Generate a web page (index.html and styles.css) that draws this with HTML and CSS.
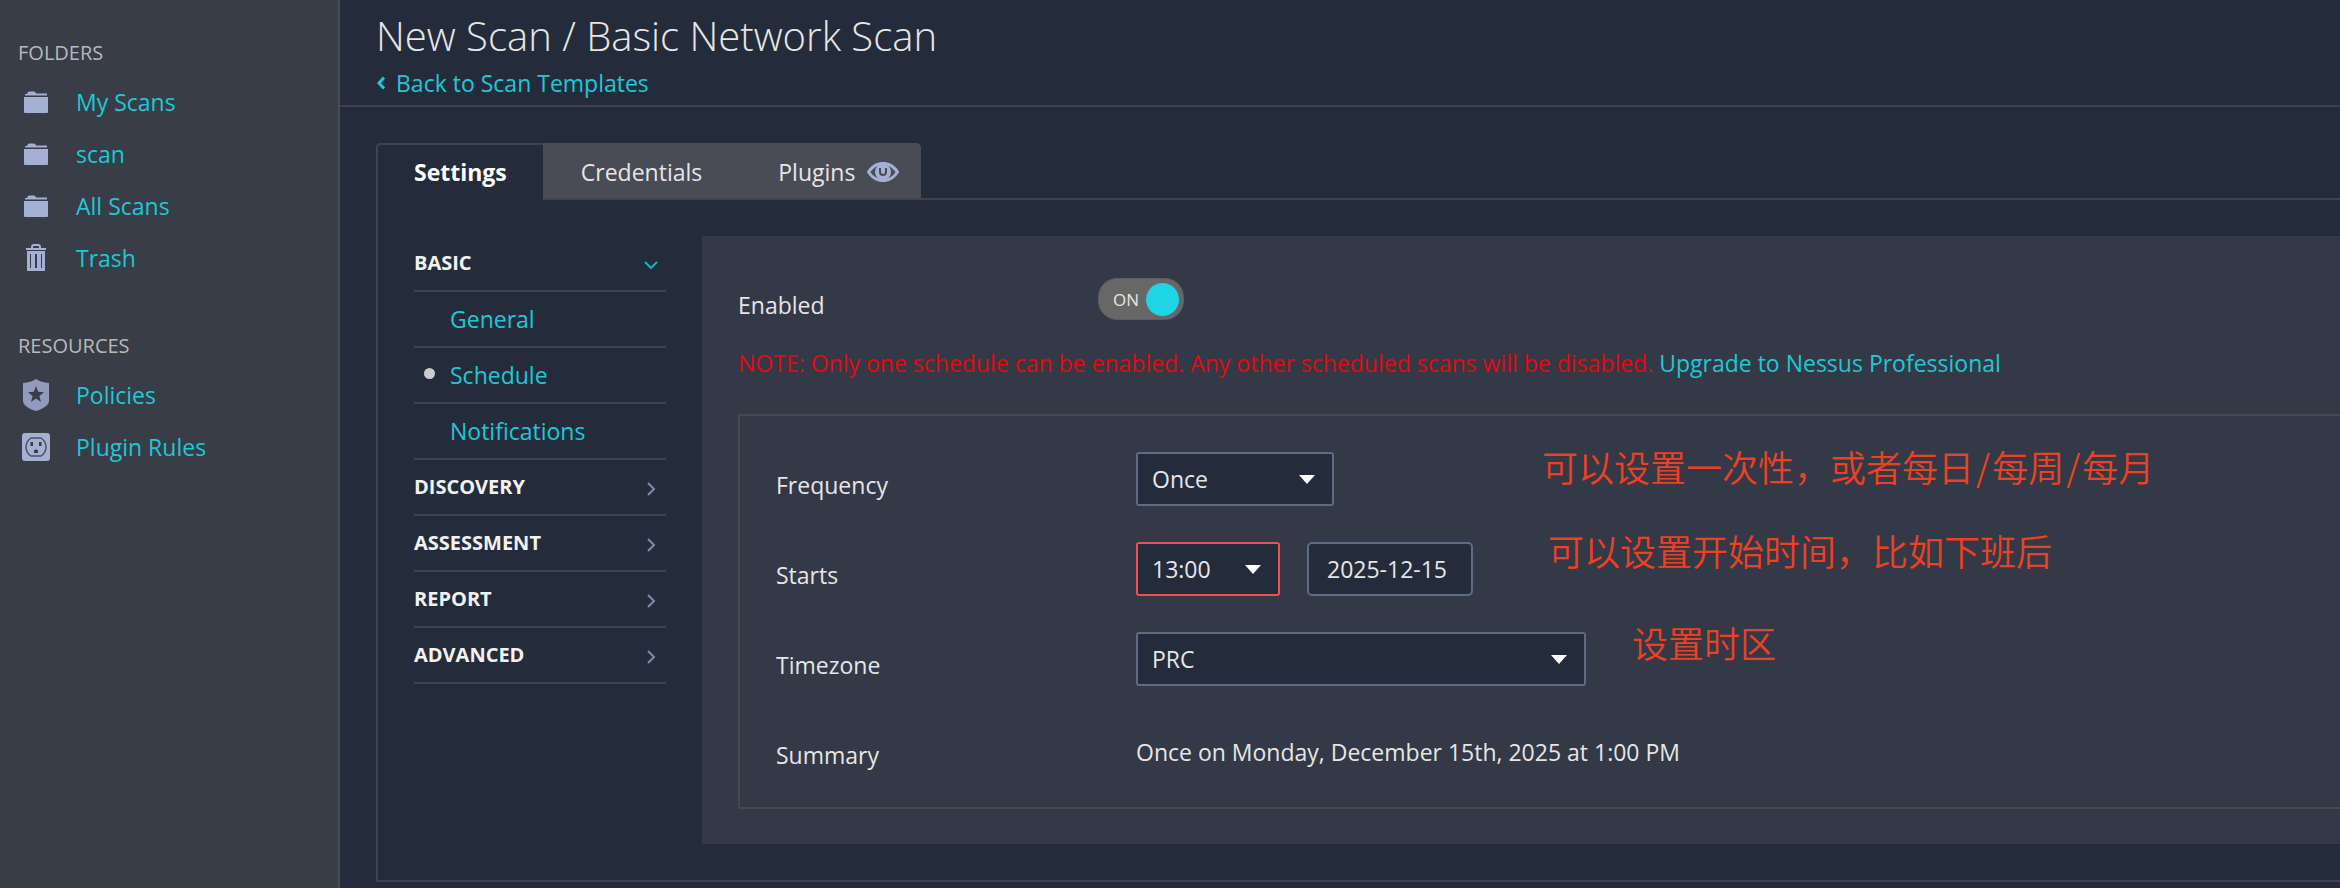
FILE: index.html
```html
<!DOCTYPE html>
<html lang="en">
<head>
    <meta charset="UTF-8">
    <meta name="viewport" content="width=device-width, initial-scale=1.0">
    <title>New Scan / Basic Network Scan</title>
    <link rel="stylesheet" href="styles.css">
</head>
<body>
    <!-- shared icons -->
    <svg class="defs" aria-hidden="true">
        <symbol id="folder" viewBox="0 0 24 22">
            <path d="M1 4.500V3h2c.6-2 1.500-2.500 3-2.500h3.500c1.500 0 2 .8 2.500 2h11v2z"/>
            <path d="M0 6h24v15a1 1 0 0 1-1 1H1a1 1 0 0 1-1-1z"/>
        </symbol>
        <symbol id="chevron" viewBox="0 0 16 16">
            <path d="M5 2l6 6-6 6" fill="none" stroke="currentColor" stroke-width="2"/>
        </symbol>
    </svg>

    <aside class="sidebar">
        <h3>Folders</h3>
        <ul>
            <li><a href="#"><span class="icon"><svg width="24" height="22"><use href="#folder"/></svg></span>My Scans</a></li>
            <li><a href="#"><span class="icon"><svg width="24" height="22"><use href="#folder"/></svg></span>scan</a></li>
            <li><a href="#"><span class="icon"><svg width="24" height="22"><use href="#folder"/></svg></span>All Scans</a></li>
            <li><a href="#"><span class="icon"><svg width="20" height="28" viewBox="0 0 20 28">
                <path d="M6 5V3a2 2 0 0 1 2-2h4a2 2 0 0 1 2 2v2" fill="none" stroke="currentColor" stroke-width="2"/>
                <path d="M0 4h20v2H0z"/>
                <path fill-rule="evenodd" d="M1 7h18v20H1zM4 10v14h1V10zM9 10v14h2V10zM15 10v14h1V10z"/>
            </svg></span>Trash</a></li>
        </ul>
        <h3>Resources</h3>
        <ul>
            <li><a href="#"><span class="icon shield"><svg width="26" height="32" viewBox="0 0 26 32">
                <path fill-rule="evenodd" d="M13 0c3 2.500 8 3.500 13 4v18c0 4-6 8-13 10C6 30 0 26 0 22V4c5-.5 10-1.500 13-4zM13 7l-2.200 5.800-5.800.4 4.600 3.800L8 23l5-3.400 5 3.400-1.600-6 4.600-3.800-5.800-.4z"/>
            </svg></span>Policies</a></li>
            <li><a href="#"><span class="icon"><svg width="28" height="28" viewBox="0 0 28 28">
                <rect width="28" height="28" rx="3"/>
                <path d="M9 5h10c3 2 5 5 5 9s-2 7-5 9H9c-3-2-5-5-5-9s2-7 5-9z" fill="none" stroke="#4a5163" stroke-width="1.500"/>
                <path d="M8.500 9h2.500v4H8.500zM17 9h2.500v4H17zM12 20v-2c0-2 4-2 4 0v2z" fill="#383d47"/>
            </svg></span>Plugin Rules</a></li>
        </ul>
    </aside>

    <div class="page">
        <header>
            <h1>New Scan / Basic Network Scan</h1>
            <a href="#" class="back"><svg width="10" height="14" viewBox="0 0 10 14"><path d="M8 1.500L3 7l5 5.500" fill="none" stroke="currentColor" stroke-width="3"/></svg>Back to Scan Templates</a>
        </header>

        <main>
            <nav class="tabs">
                <a href="#" class="active">Settings</a>
                <a href="#">Credentials</a>
                <a href="#">Plugins <svg width="32" height="20" viewBox="0 0 32 20">
                    <path d="M1.500 10C9-1.500 23-1.500 30.500 10 23 21.500 9 21.500 1.500 10z" fill="none" stroke="currentColor" stroke-width="3"/>
                    <circle cx="16" cy="10" r="8"/>
                    <path d="M13 6v4a3 3 0 0 0 6 0V6" fill="none" stroke="#494b55" stroke-width="2"/>
                </svg></a>
            </nav>

            <div class="panel">
                <ul class="menu">
                    <li class="open"><a href="#">Basic <svg width="16" height="16"><use href="#chevron"/></svg></a></li>
                    <li class="sub"><a href="#">General</a></li>
                    <li class="sub current"><a href="#">Schedule</a></li>
                    <li class="sub"><a href="#">Notifications</a></li>
                    <li><a href="#">Discovery <svg width="16" height="16"><use href="#chevron"/></svg></a></li>
                    <li><a href="#">Assessment <svg width="16" height="16"><use href="#chevron"/></svg></a></li>
                    <li><a href="#">Report <svg width="16" height="16"><use href="#chevron"/></svg></a></li>
                    <li><a href="#">Advanced <svg width="16" height="16"><use href="#chevron"/></svg></a></li>
                </ul>

                <form class="content">
                    <div class="row enabled">
                        <label for="enabled">Enabled</label>
                        <div class="toggle">
                            <input type="checkbox" id="enabled" checked>
                            <span>ON</span>
                        </div>
                    </div>
                    <p class="note">NOTE: Only one schedule can be enabled. Any other scheduled scans will be disabled. <a href="#">Upgrade to Nessus Professional</a></p>

                    <div class="schedule">
                        <div class="row">
                            <label for="frequency">Frequency</label>
                            <div class="select frequency">
                                <select id="frequency">
                                    <option>Once</option>
                                    <option>Daily</option>
                                    <option>Weekly</option>
                                    <option>Monthly</option>
                                </select>
                            </div>
                            <span class="hint hint-frequency">可以设置一次性，或者每日<i>/</i>每周<i>/</i>每月</span>
                        </div>
                        <div class="row">
                            <label for="time">Starts</label>
                            <div class="select time">
                                <select id="time">
                                    <option>13:00</option>
                                    <option>13:30</option>
                                </select>
                            </div>
                            <input type="text" class="date" value="2025-12-15" aria-label="Start date">
                            <span class="hint hint-time">可以设置开始时间，比如下班后</span>
                        </div>
                        <div class="row">
                            <label for="timezone">Timezone</label>
                            <div class="select timezone">
                                <select id="timezone">
                                    <option>PRC</option>
                                    <option>UTC</option>
                                </select>
                            </div>
                            <span class="hint hint-timezone">设置时区</span>
                        </div>
                        <div class="row">
                            <span class="label">Summary</span>
                            <span class="summary">Once on Monday, December 15th, 2025 at 1:00 PM</span>
                        </div>
                    </div>
                </form>
            </div>
        </main>
    </div>
</body>
</html>
```
FILE: styles.css
```css
* {
    box-sizing: border-box;
}
body {
    margin: 0;
    min-height: 100vh;
    display: flex;
    background: #242c3b;
    color: #e6e6e6;
    font-family: "Open Sans", "Noto Sans CJK SC", sans-serif;
    font-size: 23px;
    line-height: 32px;
}
h1, h3, p, ul {
    margin: 0;
    padding: 0;
    font-weight: 400;
}
ul {
    list-style: none;
}
a {
    color: #1ec8d6;
    text-decoration: none;
}
svg {
    display: block;
    fill: currentColor;
}
.defs {
    display: none;
}

/* left sidebar */
.sidebar {
    flex: none;
    width: 340px;
    padding-top: 39px;
    background: #383d47;
    border-right: 2px solid #494b55;
}
.sidebar h3 {
    padding-left: 18px;
    margin-bottom: 9px;
    font-size: 20px;
    line-height: 28px;
    color: #b8b8b8;
    text-transform: uppercase;
}
.sidebar ul {
    margin-bottom: 48px;
}
.sidebar li a {
    display: flex;
    align-items: center;
    height: 52px;
}
.icon {
    display: flex;
    justify-content: center;
    width: 36px;
    margin-left: 18px;
    margin-right: 22px;
    color: #a4b0d4;
}
.icon.shield {
    color: #929bbd;
}

/* page header */
.page {
    flex: 1;
    min-width: 0;
}
header {
    padding: 12px 0 6px 36px;
    border-bottom: 2px solid #40434f;
}
h1 {
    margin-bottom: 7px;
    font-size: 40px;
    font-weight: 300;
    line-height: 48px;
}
.back {
    display: flex;
    align-items: center;
    gap: 10px;
}

/* tabs */
main {
    padding: 36px 0 6px 36px;
}
.tabs {
    display: flex;
    width: max-content;
    height: 55px;
    background: #494b55;
    border-radius: 5px 5px 0 0;
}
.tabs a {
    display: flex;
    align-items: center;
    gap: 12px;
    height: 57px;
    padding: 0 38px;
    color: #e6e6e6;
}
.tabs a:last-child {
    padding-right: 22px;
}
.tabs .active {
    padding: 0 36px 2px;
    background: #242c3b;
    border: 2px solid #40434f;
    border-width: 2px 0 0 2px;
    border-radius: 5px 0 0 0;
    color: #fff;
    font-weight: 700;
}
.tabs svg {
    color: #a4b0d4;
}
.panel {
    display: flex;
    align-items: flex-start;
    gap: 36px;
    padding: 36px 0 36px 36px;
    border: 2px solid #40434f;
    border-right: 0;
}
.menu {
    flex: none;
    width: 252px;
}
.menu li {
    height: 56px;
    border-bottom: 2px solid #40434f;
}
.menu a {
    display: flex;
    align-items: center;
    justify-content: space-between;
    height: 54px;
    padding-right: 7px;
    color: #f2f2f2;
    font-size: 20px;
    font-weight: 700;
    text-transform: uppercase;
}
.menu svg {
    margin-top: 3px;
    color: #7f8bb0;
}
.menu .open svg {
    color: #1eaebc;
    transform: rotate(90deg);
}
.menu .sub a {
    justify-content: flex-start;
    padding-left: 36px;
    color: #1ec8d6;
    font-size: 23px;
    font-weight: 400;
    text-transform: none;
}
.menu .current a {
    padding-left: 10px;
    gap: 15px;
}
.menu .current a::before {
    content: "";
    width: 11px;
    height: 11px;
    margin-bottom: 4px;
    border-radius: 50%;
    background: #ccc;
}

/* schedule form */
.content {
    flex: 1;
    padding: 36px 0 35px 36px;
    background: #333946;
}
.row {
    position: relative;
    display: flex;
    height: 54px;
}
.row label, .label {
    flex: none;
    width: 360px;
    padding-top: 17px;
}
.enabled {
    height: 75px;
}
.toggle {
    position: relative;
    width: 86px;
    height: 42px;
    margin-top: 6px;
}
.toggle input {
    appearance: none;
    display: block;
    width: 86px;
    height: 42px;
    margin: 0;
    padding: 4px;
    border-radius: 19px;
    border: 1px solid #5a5d63;
    background: #676767;
}
.toggle input::before {
    content: "";
    display: block;
    width: 33px;
    height: 33px;
    margin-left: auto;
    border-radius: 50%;
    background: #1fd4e4;
}
.toggle span {
    position: absolute;
    left: 15px;
    top: 6px;
    font-size: 17px;
    pointer-events: none;
}
.note {
    color: #e00b0f;
    margin-bottom: 35px;
}
.schedule {
    padding: 36px 0 31px 36px;
    border: 2px solid #444853;
    border-right: 0;
    display: flex;
    flex-direction: column;
    gap: 36px;
}
.select {
    position: relative;
    height: 54px;
}
.select::after {
    content: "";
    position: absolute;
    right: 19px;
    top: 23px;
    border: 8px solid transparent;
    border-top: 9px solid #fff;
    border-bottom: 0;
    pointer-events: none;
}
select, .date {
    appearance: none;
    width: 100%;
    height: 54px;
    padding: 0 14px;
    border: 2px solid #5d6b84;
    border-radius: 3px;
    background: #242c3b;
    color: #e6e6e6;
    font: inherit;
}
.frequency {
    width: 198px;
}
.time {
    width: 144px;
}
.time select {
    border-color: #f0504f;
}
.timezone {
    width: 450px;
}
.date {
    width: 166px;
    margin-left: 27px;
    padding: 0 18px;
    border-radius: 5px;
}
.summary {
    padding-top: 14px;
}

/* red notes written over the form */
.hint {
    position: absolute;
    color: #ee4023;
    font-family: "Noto Sans CJK SC DemiLight", "Noto Sans CJK SC", sans-serif;
    font-size: 36px;
    font-weight: 350;
    line-height: 40px;
    white-space: nowrap;
}
.hint i {
    font-style: normal;
    margin: 0 2px;
}
.hint-frequency {
    left: 766px;
    top: -6px;
}
.hint-time {
    left: 772px;
    top: -12px;
}
.hint-timezone {
    left: 856px;
    top: -10px;
}
```
